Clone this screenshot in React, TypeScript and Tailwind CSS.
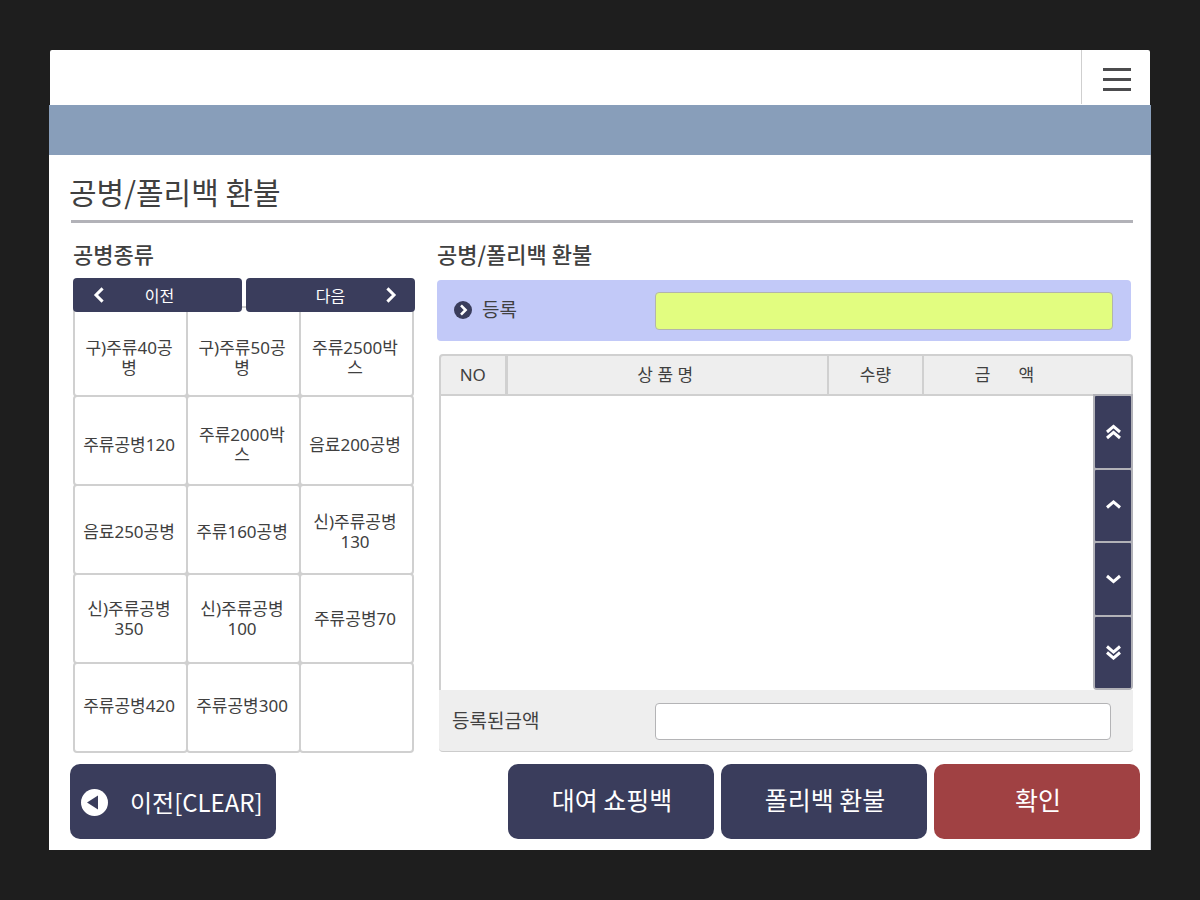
import type { ReactNode } from "react";

type IconProps = { paths: string[]; className?: string };

function Chevron({ paths, className = "" }: IconProps) {
  return (
    <svg
      viewBox="0 0 16 16"
      className={`h-4 w-4 ${className}`}
      fill="none"
      stroke="currentColor"
      strokeWidth={3}
      aria-hidden="true"
    >
      {paths.map((d) => (
        <path key={d} d={d} />
      ))}
    </svg>
  );
}

const productRows: { pad: string; items: string[] }[] = [
  { pad: "pt-3", items: ["구)주류40공\n병", "구)주류50공\n병", "주류2500박\n스"] },
  { pad: "pt-2", items: ["주류공병120", "주류2000박\n스", "음료200공병"] },
  { pad: "pt-1", items: ["음료250공병", "주류160공병", "신)주류공병\n130"] },
  { pad: "pt-0", items: ["신)주류공병\n350", "신)주류공병\n100", "주류공병70"] },
  { pad: "pb-1", items: ["주류공병420", "주류공병300", ""] },
];

const scrollButtons: { label: string; paths: string[] }[] = [
  { label: "맨 위로", paths: ["M2 8 L8.5 2.4 L15 8", "M2 14 L8.5 8.4 L15 14"] },
  { label: "위로", paths: ["M2 10.5 L8.5 4.9 L15 10.5"] },
  { label: "아래로", paths: ["M2 5 L8.5 10.6 L15 5"] },
  { label: "맨 아래로", paths: ["M2 2.5 L8.5 8.1 L15 2.5", "M2 8.5 L8.5 14.1 L15 8.5"] },
];

function ActionButton({ color, children }: { color: string; children: ReactNode }) {
  return (
    <button
      type="button"
      className={`h-[75px] w-[206px] rounded-[10px] pb-1 pl-0.5 text-[25px] text-white ${color}`}
    >
      {children}
    </button>
  );
}

function TopBar() {
  return (
    <header className="mx-px flex h-[55px] justify-end rounded-t-[2px] bg-white">
      <button
        type="button"
        aria-label="메뉴"
        className="mb-px flex w-[69px] flex-col items-center gap-[7px] border-l border-[#cfcfcf] pt-[18px] pl-[2px]"
      >
        <span className="h-[3px] w-7 bg-[#4c4c4e]" />
        <span className="h-[3px] w-7 bg-[#4c4c4e]" />
        <span className="h-[3px] w-7 bg-[#4c4c4e]" />
      </button>
    </header>
  );
}

function ProductPanel() {
  return (
    <section className="w-[342px] shrink-0">
      <h2 className="mb-[9px] pt-3.5 text-[22px] leading-8 font-medium">공병종류</h2>
      <div className="relative z-10 grid grid-cols-2 gap-1 text-base text-white">
        <button
          type="button"
          className="grid h-[34px] grid-cols-[1fr_auto_1fr] items-center rounded bg-[#3a3d5c] pl-1"
        >
          <Chevron className="ml-3.5" paths={["M11.6 1.4 L5 8 L11.6 14.6"]} />
          <span>이전</span>
        </button>
        <button
          type="button"
          className="grid h-[34px] grid-cols-[1fr_auto_1fr] items-center rounded bg-[#3a3d5c]"
        >
          <span className="col-start-2">다음</span>
          <Chevron className="mr-4 justify-self-end" paths={["M4.4 1.4 L11 8 L4.4 14.6"]} />
        </button>
      </div>
      <div className="-mt-1.5 mr-px flex flex-col font-['Noto_Sans','Noto_Sans_CJK_KR',sans-serif]">
        {productRows.map((row, r) => (
          <div key={r} className="-mb-0.5 flex">
            {row.items.map((name, c) => (
              <button
                key={c}
                type="button"
                aria-label={name ? undefined : "빈 칸"}
                className={`h-[91px] flex-1 rounded border-2 border-[#d0d0d0] pr-[3px] text-[17px] leading-5 whitespace-pre ${c > 0 ? "-ml-0.5" : ""} ${row.pad}`}
              >
                {name}
              </button>
            ))}
          </div>
        ))}
      </div>
    </section>
  );
}

function RefundPanel() {
  return (
    <section className="min-w-0 flex-1">
      <h2 className="mb-[11px] pt-3.5 text-[22px] leading-8 font-medium">공병/폴리백 환불</h2>
      <div className="mr-0.5 flex h-[61px] items-center rounded bg-[#c2c9f8] pr-[18px] pl-[17px]">
        <label htmlFor="register" className="flex w-[201px] items-center gap-2.5 pb-0.5 text-[19px]">
          <svg viewBox="0 0 18 18" className="h-[18px] w-[18px]" aria-hidden="true">
            <circle cx="9" cy="9" r="9" fill="#3a3d5c" />
            <path d="M7 4.4 L11.6 9 L7 13.6" fill="none" stroke="#fff" strokeWidth="2.6" />
          </svg>
          등록
        </label>
        <input
          id="register"
          type="text"
          className="h-[38px] min-w-0 flex-1 rounded border border-[#b2b5ac] bg-[#e2fd80] px-3 text-lg"
        />
      </div>

      <div className="mt-[13px] ml-0.5">
        <div className="overflow-hidden rounded-t border-2 border-[#d0d0d0] bg-[#eeeeee]">
          <table className="w-full table-fixed text-[17px] font-['Noto_Sans','Noto_Sans_CJK_KR',sans-serif]">
            <colgroup>
              <col className="w-[65px]" />
              <col />
              <col className="w-[95px]" />
              <col className="w-[208px]" />
            </colgroup>
            <thead>
              <tr className="h-[38px]">
                <th scope="col" className="border-r-3 border-[#d0d0d0] font-normal">NO</th>
                <th scope="col" className="border-r-2 border-[#d0d0d0] pr-1 font-normal">상 품 명</th>
                <th scope="col" className="border-r-2 border-[#d0d0d0] font-normal">수량</th>
                <th scope="col" className="pr-[46px] font-normal">
                  <span className="inline-flex gap-7">
                    <span>금</span>
                    <span>액</span>
                  </span>
                </th>
              </tr>
            </thead>
            <tbody />
          </table>
        </div>
        <div className="flex h-[294px]">
          <div className="flex-1 border-l-2 border-[#d0d0d0]" />
          <div className="-mt-0.5 flex w-10 flex-col gap-0.5 rounded-b border-2 border-[#b2b2b8] bg-[#b2b2b8]">
            {scrollButtons.map((b) => (
              <button
                key={b.label}
                type="button"
                aria-label={b.label}
                className="flex flex-1 items-center justify-center rounded-[1px] bg-[#3a3d5c] text-white"
              >
                <Chevron paths={b.paths} />
              </button>
            ))}
          </div>
        </div>
        <div className="flex h-[62px] items-center rounded-b border-b border-[#cccccc] bg-[#eeeeee] pt-px pr-[22px] pl-[13px]">
          <label htmlFor="amount" className="w-[203px] pb-0.5 text-[19px]">
            등록된금액
          </label>
          <input
            id="amount"
            type="text"
            className="h-[37px] min-w-0 flex-1 rounded border border-[#b4b4b6] bg-white px-3 text-right text-lg"
          />
        </div>
      </div>
    </section>
  );
}

export default function App() {
  return (
    <div className="min-h-screen bg-[#1e1e1e] px-[49px] py-[50px] font-['Noto_Sans_CJK_KR',sans-serif] text-[#404040]">
      <TopBar />
      <div className="h-[50px] bg-[#889eba]" />
      <main className="border-r border-[#d0d2da] bg-white pr-[17px] pb-[11px] pl-5">
        <h1 className="h-[65px] pt-4 text-[30px] leading-10">공병/폴리백 환불</h1>
        <div className="ml-0.5 h-[3px] bg-[#b2b2b8]" />
        <div className="ml-1 flex items-start gap-[22px]">
          <ProductPanel />
          <RefundPanel />
        </div>
        <div className="mt-3 -mr-[7px] ml-px flex flex-wrap justify-between gap-[7px]">
          <button
            type="button"
            className="flex h-[75px] w-[206px] items-center gap-[22px] rounded-[10px] bg-[#3a3d5c] pt-0.5 pl-[11px] text-2xl text-white"
          >
            <svg viewBox="0 0 27 27" className="h-[27px] w-[27px]" aria-hidden="true">
              <circle cx="13.5" cy="13.5" r="13.5" fill="#fff" />
              <path d="M6 13.5 L17 6.6 V20.4 Z" fill="#3a3d5c" />
            </svg>
            <span className="pb-0.5">이전[CLEAR]</span>
          </button>
          <div className="flex gap-[7px]">
            <ActionButton color="bg-[#3a3d5c]">대여 쇼핑백</ActionButton>
            <ActionButton color="bg-[#3a3d5c]">폴리백 환불</ActionButton>
            <ActionButton color="bg-[#a04143]">확인</ActionButton>
          </div>
        </div>
      </main>
    </div>
  );
}
